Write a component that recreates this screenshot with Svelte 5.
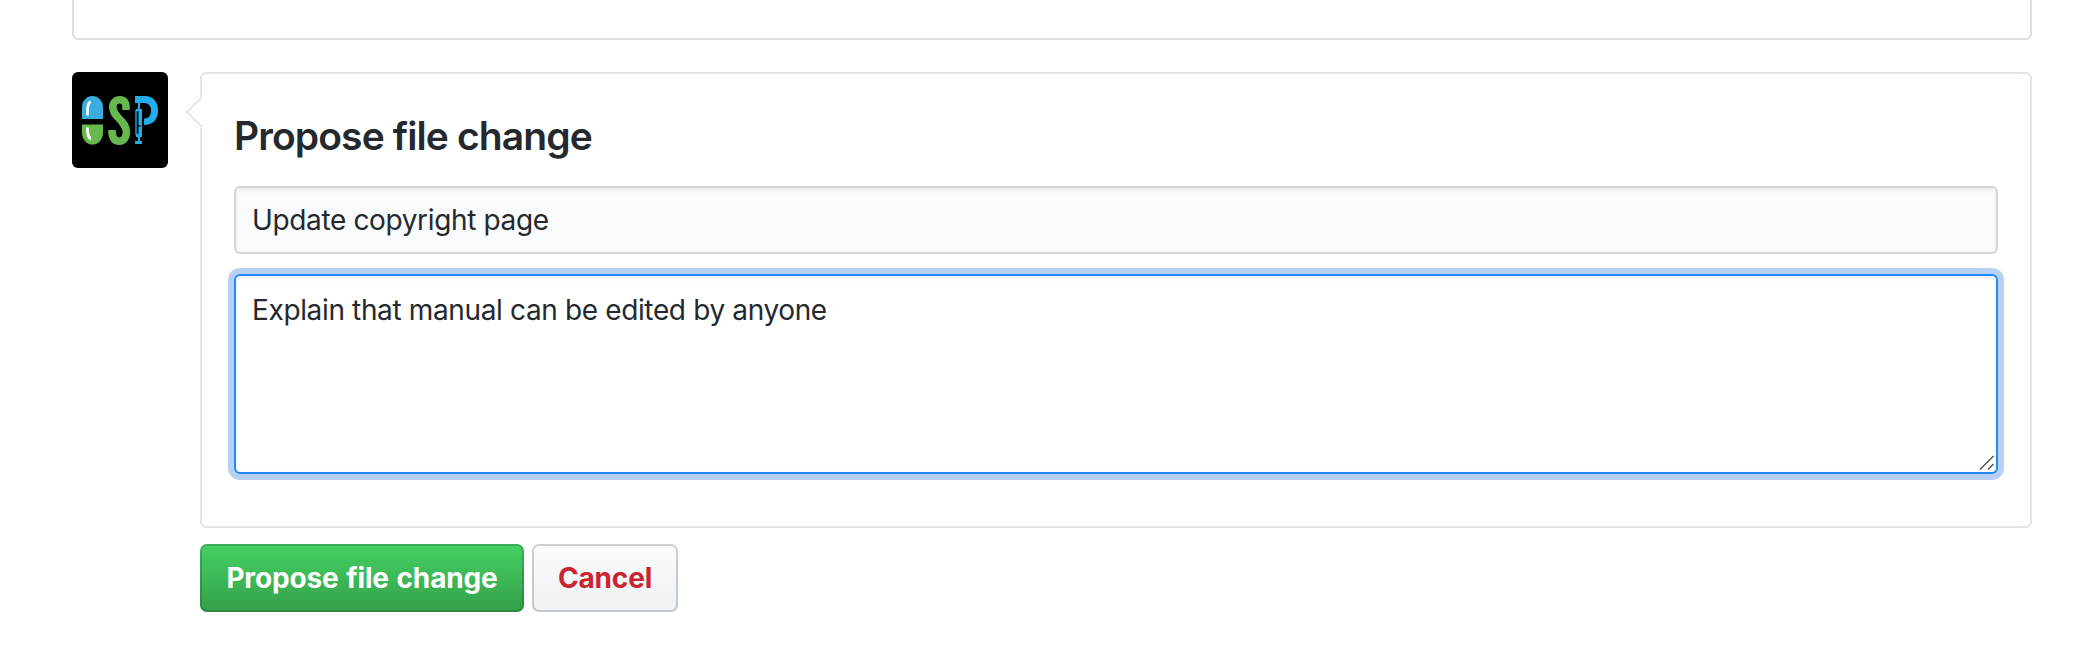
<script>
  let summary = $state('Update copyright page');
  let description = $state('Explain that manual can be edited by anyone');
</script>

<main>
  <div class="editor"></div>
  <div class="commit">
    <svg class="avatar" viewBox="0 0 96 96" role="img" aria-label="OSP">
      <rect width="96" height="96" rx="6" fill="#000" />
      <path d="M10 47V35a10.5 11 0 0 1 21 0v12z" fill="#39ade0" />
      <path d="M10 52.500h21V61a10.500 11.500 0 0 1-21 0z" fill="#66b94d" />
      <path d="M18.500 29.500q-3 2.500-3 7.500v6.500" fill="none" stroke="#fff" stroke-width="2.600" />
      <path d="M14 55.500q0 12 5 13v-3.500q-2.200-2-2.200-9.500z" fill="#fff" />
      <path d="M54 38v-3.500c0-4-2.200-6.700-6.200-6.700s-7 3.200-7 7.200c0 10.500 13.600 13.500 13.600 25 0 5.500-2.600 9.200-7.200 9.200-4.800 0-7.200-3.700-7.200-11.200" fill="none" stroke="#66b94d" stroke-width="7.600" />
      <path d="M63 24h10c8 0 13 5.500 13 14.500S81 53 72 53v-6.500c4.500 0 7-2.500 7-8s-3-7.500-7.500-7.500H63z" fill="#24adeb" />
      <path d="M67 31v7M64 38h6M64 64h6M67 64v7" stroke="#24adeb" stroke-width="2" fill="none" />
      <path d="M64 38.500h5.300V62.500H64z" fill="#000" stroke="#24adeb" stroke-width="1.300" />
      <path d="M66.500 39h3v14h-3zM66.500 54.500h3V64h-3zM63 69h7v3h-7z" fill="#24adeb" />
    </svg>
    <div class="content">
      <section class="card">
        <svg class="pointer" viewBox="0 0 16 32" aria-hidden="true">
          <path d="M16 0v32h-1L1 16 15 1z" fill="#fff" />
          <path d="M15.500 1.500L1 16l14.500 14.500" fill="none" stroke="#ddd" stroke-width="1.500" />
        </svg>
        <h3>Propose file change</h3>
        <input type="text" bind:value={summary} aria-label="Commit summary" />
        <div class="field">
          <textarea bind:value={description} spellcheck="false" aria-label="Commit description"></textarea>
          <svg class="grip" viewBox="0 0 16 16" aria-hidden="true">
            <path d="M1 14.500L14.500 1M9 14.500L14.500 9" stroke="#555" stroke-width="1.500" fill="none" />
          </svg>
        </div>
      </section>
      <div class="actions">
        <button class="primary">Propose file change</button>
        <button class="cancel">Cancel</button>
      </div>
    </div>
  </div>
</main>

<style>
  :global(body) { background: #fff; }
  * { box-sizing: border-box; }
  main {
    height: 648px;
    padding: 0 52px 0 72px;
    overflow: hidden;
    color: #24292e;
    font-family: Inter, sans-serif;
  }
  .editor {
    height: 40px;
    border: 2px solid #ddd;
    border-top: 0;
    border-radius: 0 0 6px 6px;
  }
  .commit { display: flex; gap: 32px; margin-top: 32px; }
  .avatar { width: 96px; height: 96px; flex: none; }
  .content { flex: 1; }
  .card {
    position: relative;
    height: 456px;
    padding: 38px 32px 0;
    border: 2px solid #e1e4e8;
    border-radius: 6px;
  }
  .pointer { position: absolute; left: -16px; top: 22px; width: 16px; height: 32px; }
  h3 {
    margin: 0 0 22px;
    height: 52px;
    font-size: 39px;
    line-height: 48px;
    font-weight: 600;
    letter-spacing: -0.9px;
  }
  input, textarea {
    display: block;
    width: 100%;
    margin: 0;
    color: #24292e;
    font: 28px/42px Inter, sans-serif;
    letter-spacing: -0.36px;
    border-radius: 6px;
    outline: none;
  }
  input {
    height: 68px;
    padding: 0 16px;
    background: #fafbfc;
    border: 2px solid #d1d5da;
    box-shadow: inset 0 2px 4px rgba(27, 31, 35, 0.075);
  }
  .field { position: relative; margin-top: 20px; }
  textarea {
    height: 200px;
    padding: 13px 16px;
    resize: none;
    background: #fff;
    border: 2px solid #2188ff;
    box-shadow: inset 0 2px 4px rgba(27, 31, 35, 0.075), 0 0 0 6px #b8d1f2;
  }
  .grip { position: absolute; right: 3px; bottom: 3px; width: 16px; height: 16px; }
  .actions { display: flex; gap: 8px; margin-top: 16px; }
  button {
    height: 68px;
    padding: 0;
    font: 700 28px/40px Inter, sans-serif;
    letter-spacing: -0.15px;
    word-spacing: 1.2px;
    white-space: nowrap;
    border: 2px solid rgba(27, 31, 35, 0.2);
    border-radius: 7px;
    background-origin: border-box;
  }
  .primary { width: 324px; color: #fff; background-color: #28a745; background-image: linear-gradient(#45d163, #34a04a); }
  .cancel { width: 146px; color: #cb2431; background-color: #eff3f6; background-image: linear-gradient(#fafbfc, #eff3f6 90%); }
</style>
